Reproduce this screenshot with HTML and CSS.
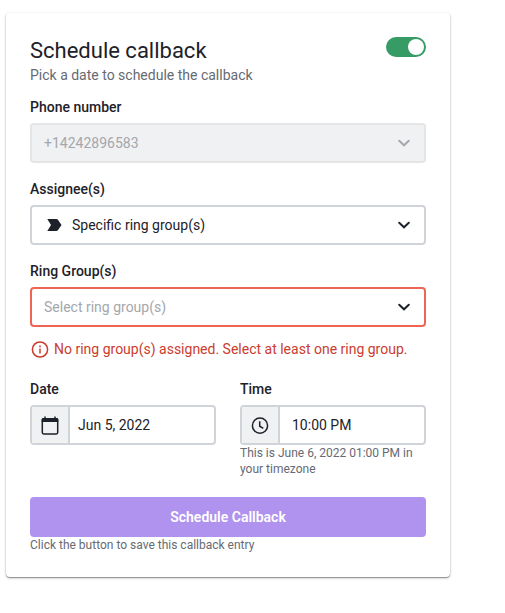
FILE: index.html
```html
<!DOCTYPE html>
<html lang="en">
<head>
<meta charset="utf-8">
<title>Schedule callback</title>
<link rel="stylesheet" href="styles.css">
</head>
<body>
<main class="card">
  <header class="head">
    <div>
      <h1 class="title">Schedule callback</h1>
      <p class="subtitle">Pick a date to schedule the callback</p>
    </div>
    <div class="toggle"><span class="knob"></span></div>
  </header>

  <label class="label">Phone number</label>
  <div class="field disabled">
    <span>+14242896583</span>
    <svg class="chevron" viewBox="0 0 14 10"><path d="M2.200 2.800 7 7.300 11.800 2.800"/></svg>
  </div>

  <label class="label">Assignee(s)</label>
  <div class="field">
    <svg class="tag" viewBox="0 0 16 12"><path d="M.3 0h9c.7 0 1.200.3 1.600.8L14.500 6l-3.600 5.200c-.4.500-.9.800-1.600.8h-9L4 6z"/></svg>
    <span>Specific ring group(s)</span>
    <svg class="chevron" viewBox="0 0 14 10"><path d="M2.200 2.800 7 7.300 11.800 2.800"/></svg>
  </div>

  <label class="label">Ring Group(s)</label>
  <div class="field invalid">
    <span>Select ring group(s)</span>
    <svg class="chevron" viewBox="0 0 14 10"><path d="M2.200 2.800 7 7.300 11.800 2.800"/></svg>
  </div>
  <p class="error">
    <svg viewBox="0 0 18 18"><circle cx="9" cy="9.500" r="7.600"/><path d="M9 8.500V13.500M9 5.500v1.700"/></svg>
    <span>No ring group(s) assigned. Select at least one ring group.</span>
  </p>

  <div class="when">
    <div>
      <label class="label">Date</label>
      <div class="field split">
        <span class="addon"><svg viewBox="0 0 20 20"><path class="solid" d="M3.200 3h13.600c.9 0 1.500.6 1.500 1.500V7H1.700V4.500C1.700 3.600 2.300 3 3.200 3z"/><rect x="2.300" y="3.800" width="15.400" height="15.200" rx="1.400"/><path d="M5 1.500v2.500M15 1.500v2.500"/></svg></span>
        <span class="date">Jun 5, 2022</span>
      </div>
    </div>
    <div>
      <label class="label">Time</label>
      <div class="field split">
        <span class="addon"><svg viewBox="0 0 20 20"><circle cx="10" cy="10.700" r="7.600"/><path d="M9.700 6.200v5l3.600 2.100"/></svg></span>
        <span class="time">10:00 PM</span>
      </div>
      <p class="hint">This is June 6, 2022 01:00 PM in your timezone</p>
    </div>
  </div>

  <button class="submit">Schedule Callback</button>
  <p class="hint">Click the button to save this callback entry</p>
</main>
</body>
</html>
```
FILE: styles.css
```css
* { box-sizing: border-box; }
body { margin: 0; min-height: 100vh; padding: 13px 6px 36px; background: #fff; font: 14px/20px Roboto, sans-serif; color: #1d2129; }
h1, p { margin: 0; }
.card { width: 444px; height: 564px; padding: 24px; border-radius: 4px; background: #fff; box-shadow: 0 1px 1px rgba(0,0,0,.32), 0 1px 3px rgba(0,0,0,.24); }
.head { display: flex; justify-content: space-between; height: 60px; }
.title { font-size: 22px; line-height: 28px; font-weight: 400; }
.subtitle { line-height: 20px; color: #666a73; }
.toggle { width: 40px; height: 20px; border-radius: 10px; background: #369b65; padding: 2px; display: flex; justify-content: flex-end; }
.knob { width: 16px; height: 16px; border-radius: 50%; background: #fff; }
.label { display: block; height: 26px; line-height: 20px; font-weight: 500; }
.field { height: 40px; border: 2px solid #d0d4d9; border-radius: 4px; padding: 0 12px; display: flex; align-items: center; margin-bottom: 16px; }
.chevron { width: 14px; height: 10px; margin-left: auto; margin-right: 1px; fill: none; stroke: currentColor; stroke-width: 2; stroke-linecap: round; }
.disabled { background: #f0f1f3; border-color: #e3e5e7; color: #a4a7ab; }
.tag { width: 16px; height: 12px; margin: 0 9px 0 3px; fill: currentColor; }
.invalid { border-color: #f06455; margin-bottom: 12px; }
.invalid span { color: #a4a7ab; }
.error { display: flex; align-items: center; gap: 5px; height: 20px; margin: 0 0 20px 1px; color: #cb3c2e; }
.error svg { width: 18px; height: 18px; fill: none; stroke: currentColor; stroke-width: 1.5; }
.when { display: grid; grid-template-columns: 1fr 1fr; gap: 24px; height: 118px; }
.split { padding: 0; margin: 0; }
.addon { width: 38px; height: 36px; display: flex; align-items: center; justify-content: center; background: #f0f1f3; border-right: 2px solid #d0d4d9; }
.addon svg { width: 20px; height: 20px; fill: none; stroke: currentColor; stroke-width: 1.500; }
.addon .solid { fill: currentColor; stroke: none; }
.date { margin-left: 8px; }
.time { margin-left: 12px; }
.hint { font-size: 12px; line-height: 16px; color: #666a73; }
.submit { display: block; width: 100%; height: 40px; border: 0; border-radius: 4px; background: #b093ee; color: #fff; font: 600 14px/20px Roboto, sans-serif; }
```
